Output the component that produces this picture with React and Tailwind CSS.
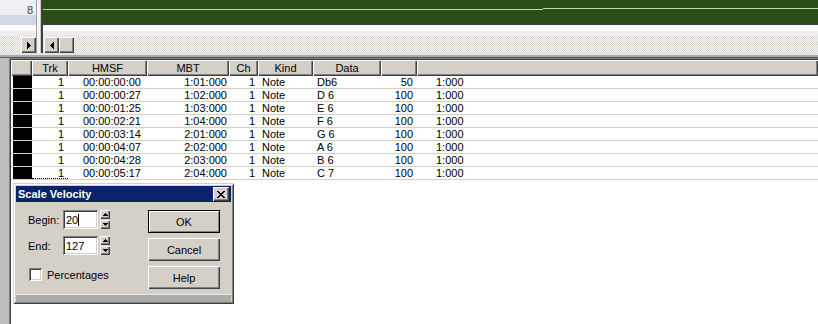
import React from "react";

const btnRaised =
  "shadow-[inset_1px_1px_0_#ffffff,inset_-1px_-1px_0_#404040,inset_-2px_-2px_0_#808080]";
const sunken =
  "shadow-[inset_1px_1px_0_#808080,inset_-1px_-1px_0_#ffffff,inset_2px_2px_0_#404040,inset_-2px_-2px_0_#d4d0c8]";
const headerBevel =
  "shadow-[inset_1px_1px_0_#ffffff,inset_-1px_-1px_0_#404040,inset_-2px_-2px_0_#808080]";
const hatched =
  "bg-[image:repeating-conic-gradient(#d4d0c8_0%_25%,#ffffff_0%_50%)] bg-[length:2px_2px]";

function ArrowRight() {
  return (
    <svg width="4" height="7" shapeRendering="crispEdges">
      <rect x="0" y="0" width="1" height="7" fill="#000" />
      <rect x="1" y="1" width="1" height="5" fill="#000" />
      <rect x="2" y="2" width="1" height="3" fill="#000" />
      <rect x="3" y="3" width="1" height="1" fill="#000" />
    </svg>
  );
}

function ArrowLeft() {
  return (
    <svg width="4" height="7" shapeRendering="crispEdges">
      <rect x="3" y="0" width="1" height="7" fill="#000" />
      <rect x="2" y="1" width="1" height="5" fill="#000" />
      <rect x="1" y="2" width="1" height="3" fill="#000" />
      <rect x="0" y="3" width="1" height="1" fill="#000" />
    </svg>
  );
}

function CloseGlyph() {
  const px = [
    "XX....XX",
    ".XX..XX.",
    "..XXXX..",
    "...XX...",
    "..XXXX..",
    ".XX..XX.",
    "XX....XX",
  ];
  return (
    <svg width="8" height="7" shapeRendering="crispEdges">
      {px.flatMap((row, y) =>
        row.split("").map((c, x) =>
          c === "X" ? <rect key={x + "-" + y} x={x} y={y} width="1" height="1" fill="#000" /> : null
        )
      )}
    </svg>
  );
}

function SpinUp() {
  return (
    <svg width="5" height="3" shapeRendering="crispEdges">
      <rect x="2" y="0" width="1" height="1" fill="#000" />
      <rect x="1" y="1" width="3" height="1" fill="#000" />
      <rect x="0" y="2" width="5" height="1" fill="#000" />
    </svg>
  );
}

function SpinDown() {
  return (
    <svg width="5" height="3" shapeRendering="crispEdges">
      <rect x="0" y="0" width="5" height="1" fill="#000" />
      <rect x="1" y="1" width="3" height="1" fill="#000" />
      <rect x="2" y="2" width="1" height="1" fill="#000" />
    </svg>
  );
}

function SpinBox() {
  return (
    <div className="ml-[2px] flex w-[10px] flex-col gap-[1px]">
      <div className={"flex h-[9px] items-center justify-center bg-[#d4d0c8] " + btnRaised}>
        <SpinUp />
      </div>
      <div className={"flex h-[9px] items-center justify-center bg-[#d4d0c8] " + btnRaised}>
        <SpinDown />
      </div>
    </div>
  );
}

const rows = [
  ["00:00:00:00", "1:01:000", "Db6", "50"],
  ["00:00:00:27", "1:02:000", "D 6", "100"],
  ["00:00:01:25", "1:03:000", "E 6", "100"],
  ["00:00:02:21", "1:04:000", "F 6", "100"],
  ["00:00:03:14", "2:01:000", "G 6", "100"],
  ["00:00:04:07", "2:02:000", "A 6", "100"],
  ["00:00:04:28", "2:03:000", "B 6", "100"],
  ["00:00:05:17", "2:04:000", "C 7", "100"],
];

export default function App() {
  return (
    <div className="relative h-[324px] w-[818px] overflow-hidden bg-white font-['Liberation_Sans',Arial,sans-serif] text-[11px] text-black">
      {/* top region */}
      <div className="flex h-[53px]">
        <div className="flex w-[36px] flex-col">
          <div className="flex h-[15px] justify-end bg-[#eef0f5] pr-[3px] pt-[5px] leading-[11px] text-[#404040]">
            8
          </div>
          <div className="h-[10px] bg-[#d3d7e3]" />
          <div className="h-[6px] bg-white" />
          <div className="h-[5px] bg-[#ececec]" />
          <div className={"flex h-[17px] items-start justify-end pt-[1px] " + hatched}>
            <div className={"flex h-[16px] w-[15px] items-center justify-center bg-[#d4d0c8] " + btnRaised}>
              <ArrowRight />
            </div>
          </div>
        </div>
        <div className="flex w-[7px]">
          <div className="w-[1px] bg-[#a0a0a0]" />
          <div className="w-[3px] bg-[#f4f4f4]" />
          <div className="w-[1px] bg-[#c8c8c8]" />
          <div className="w-[2px] bg-[#404040]" />
        </div>
        <div className="flex flex-1 flex-col">
          <div className="h-[23px] bg-[#2b4e16]">
            <svg width="775" height="23" shapeRendering="crispEdges">
              <rect x="0" y="9" width="500" height="1" fill="#a8e89c" />
              <rect x="500" y="8" width="275" height="1" fill="#a8e89c" />
            </svg>
          </div>
          <div className="h-[2px] bg-[#404040]" />
          <div className="h-[6px] bg-white" />
          <div className="h-[5px] bg-[#ececec]" />
          <div className={"flex h-[17px] items-start pl-[1px] pt-[1px] " + hatched}>
            <div className={"flex h-[16px] w-[15px] items-center justify-center bg-[#d4d0c8] " + btnRaised}>
              <ArrowLeft />
            </div>
            <div className={"h-[16px] w-[15px] bg-[#d4d0c8] " + btnRaised} />
          </div>
        </div>
      </div>

      {/* horizontal splitter */}
      <div className="flex h-[5px] flex-col">
        <div className="h-[2px] bg-[#e4e4e4]" />
        <div className="h-[2px] bg-[#a8a8a8]" />
        <div className="h-[1px] bg-[#5a5a5a]" />
      </div>

      {/* bottom region */}
      <div className="flex h-[266px]">
        <div className="w-[9px] bg-[#bdbdbd]" />
        <div className="flex flex-1 flex-col bg-white pl-[2px] pt-[2px] shadow-[inset_1px_1px_0_#808080,inset_2px_2px_0_#404040]">
          {/* header */}
          <div className="flex h-[16px] leading-[16px]">
            <div className={"w-[21px] bg-[#d4d0c8] " + headerBevel} />
            <div className={"w-[36px] bg-[#d4d0c8] text-center " + headerBevel}>Trk</div>
            <div className={"w-[79px] bg-[#d4d0c8] text-center " + headerBevel}>HMSF</div>
            <div className={"w-[82px] bg-[#d4d0c8] text-center " + headerBevel}>MBT</div>
            <div className={"w-[29px] bg-[#d4d0c8] text-center " + headerBevel}>Ch</div>
            <div className={"w-[55px] bg-[#d4d0c8] text-center " + headerBevel}>Kind</div>
            <div className={"w-[68px] bg-[#d4d0c8] text-center " + headerBevel}>Data</div>
            <div className={"w-[36px] bg-[#d4d0c8] " + headerBevel} />
            <div className={"flex-1 bg-[#d4d0c8] " + headerBevel} />
          </div>
          {/* rows */}
          {rows.map((r, i) => (
            <div
              key={i}
              className="flex h-[13px] border-b border-[#d4d0c8] leading-[12px] whitespace-pre"
            >
              <div className="w-[21px] pl-[2px]">
                <div className="h-full w-[19px] bg-black" />
              </div>
              <div
                className={
                  i === rows.length - 1
                    ? "w-[36px] border-b border-dotted border-black pr-[4px] text-right"
                    : "w-[36px] pr-[4px] text-right"
                }
              >
                1
              </div>
              <div className="w-[79px] pr-[6px] text-right">{r[0]}</div>
              <div className="w-[82px] pr-[2px] text-right">{r[1]}</div>
              <div className="w-[29px] pr-[3px] text-right">1</div>
              <div className="w-[55px] pl-[4px]">Note</div>
              <div className="w-[68px] pl-[4px]">{r[2]}</div>
              <div className="w-[36px] pr-[4px] text-right">{r[3]}</div>
              <div className="flex-1 pl-[19px]">1:000</div>
            </div>
          ))}
        </div>
      </div>

      {/* dialog */}
      <div
        className={
          "absolute left-[13px] top-[183px] flex h-[121px] w-[221px] flex-col bg-[#d4d0c8] px-[3px] pt-[3px] " +
          "shadow-[inset_1px_1px_0_#d4d0c8,inset_-1px_-1px_0_#404040,inset_2px_2px_0_#ffffff,inset_-2px_-2px_0_#808080]"
        }
      >
        <div className="flex h-[16px] items-center justify-between bg-[#0a246a] pl-[2px] pr-[2px]">
          <span className="text-[11px] font-bold leading-[12px] text-white">Scale Velocity</span>
          <div className={"flex h-[14px] w-[16px] items-center justify-center bg-[#d4d0c8] " + btnRaised}>
            <CloseGlyph />
          </div>
        </div>
        <div className="flex h-[92px]">
          <div className="w-[132px] pl-[12px] pt-[8px]">
            <div className="flex h-[19px] items-center leading-[12px]">
              <span className="w-[35px]">Begin:</span>
              <div className={"flex h-[19px] w-[35px] items-center bg-white pl-[3px] " + sunken}>
                <span>20</span>
                <span className="h-[12px] w-[1px] bg-black" />
              </div>
              <SpinBox />
            </div>
            <div className="mt-[7px] flex h-[19px] items-center leading-[12px]">
              <span className="w-[35px]">End:</span>
              <div className={"flex h-[19px] w-[35px] items-center bg-white pl-[3px] " + sunken}>
                <span>127</span>
              </div>
              <SpinBox />
            </div>
            <div className="mt-[13px] flex items-center leading-[12px]">
              <div className={"ml-[1px] h-[13px] w-[13px] bg-white " + sunken} />
              <span className="ml-[5px]">Percentages</span>
            </div>
          </div>
          <div className="flex flex-col gap-[5px] pt-[8px] leading-[12px]">
            <div className="flex h-[23px] w-[72px] items-center justify-center border border-black bg-[#d4d0c8] shadow-[inset_1px_1px_0_#ffffff,inset_-1px_-1px_0_#808080]">
              OK
            </div>
            <div className={"flex h-[23px] w-[72px] items-center justify-center bg-[#d4d0c8] " + btnRaised}>
              Cancel
            </div>
            <div className={"flex h-[23px] w-[72px] items-center justify-center bg-[#d4d0c8] " + btnRaised}>
              Help
            </div>
          </div>
        </div>
        <div className="h-[8px] border-t border-[#e8e8e8] bg-[#acaca8]" />
      </div>
    </div>
  );
}
